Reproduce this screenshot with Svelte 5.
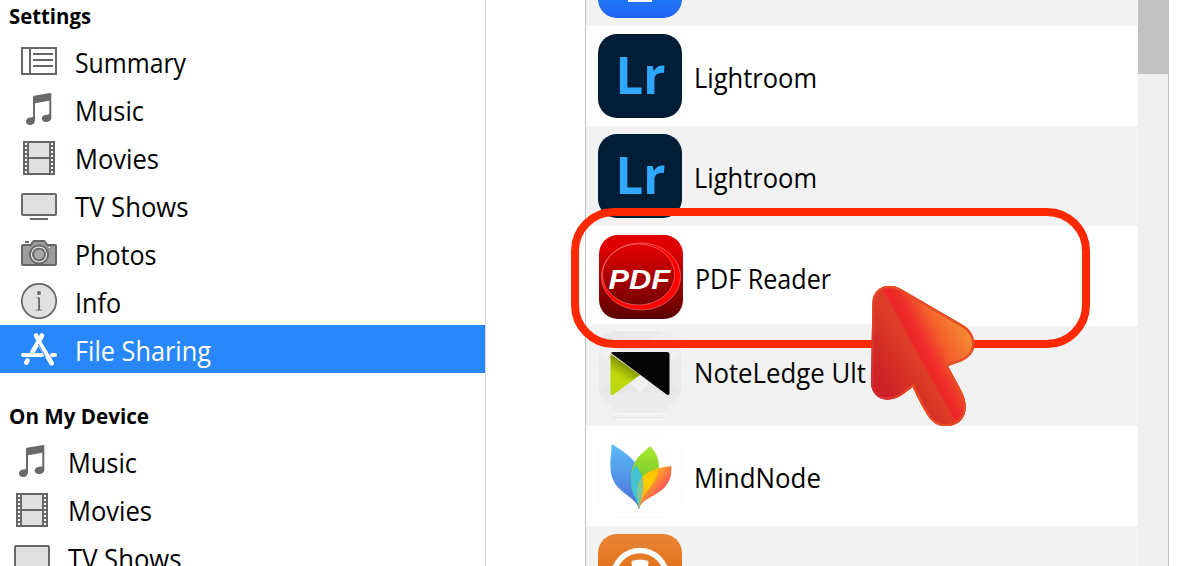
<script lang="ts">
  type Item = { label: string; icon: string; width: number };

  const settings: Item[] = [
    { label: "Summary", icon: "summary", width: 111 },
    { label: "Music", icon: "music", width: 69 },
    { label: "Movies", icon: "movies", width: 84 },
    { label: "TV Shows", icon: "tv", width: 113.5 },
    { label: "Photos", icon: "photos", width: 81.5 },
    { label: "Info", icon: "info", width: 46 },
    { label: "File Sharing", icon: "apps", width: 136 },
  ];

  const device: Item[] = [
    { label: "Music", icon: "music", width: 69 },
    { label: "Movies", icon: "movies", width: 84 },
    { label: "TV Shows", icon: "tv", width: 113.5 },
  ];

  const apps = [
    { name: "", icon: "blue", width: 0 },
    { name: "Lightroom", icon: "lr", width: 123 },
    { name: "Lightroom", icon: "lr", width: 123 },
    { name: "PDF Reader", icon: "pdf", width: 136 },
    { name: "NoteLedge Ult", icon: "note", width: 172 },
    { name: "MindNode", icon: "mind", width: 127 },
    { name: "", icon: "orange", width: 0 },
  ];

  const holes = [2, 6, 10, 14, 18, 22, 26, 30];
  let active = "File Sharing";
</script>

{#snippet label(text: string, width: number)}
  <svg class="label" width={width + 4} height="40" viewBox="0 0 {width + 4} 40">
    <text x="0" y="29" textLength={width} lengthAdjust="spacingAndGlyphs">{text}</text>
  </svg>
{/snippet}

{#snippet sideIcon(name: string)}
  <svg class="side-icon" viewBox="0 0 36 36" width="36" height="36">
    {#if name === "summary"}
      <path d="M1 5h34v26H1zM9 5v26" fill="none" stroke="#666" stroke-width="2" />
      <path d="M12 11h20M12 17h20M12 23h20" stroke="#666" stroke-width="2" />
    {:else if name === "music"}
      <path
        d="M12 6Q12 5 13 4.700L29 2Q30.300 1.800 30.300 3V26.500C30.300 29.500 28 31 25 31C22.500 31 20.700 29.700 20.700 27.600C20.700 25 23 23.700 26 23.700Q28.300 23.700 28.300 22.500V9.700L14 12.300V29C14 32 12 34 9 34C6.700 34 5 32.500 5 30.500C5 28 7 26.500 10 26.500Q12 26.500 12 25z"
        fill="#696969"
      />
    {:else if name === "movies"}
      <rect x="2" y="2" width="32" height="34" fill="#666" />
      <path d="M8 4h20v14H8zM8 20h20v14H8z" fill="#e0e0e0" />
      {#each holes as y}
        <path d="M4 {y + 2}h2v2H4zM30 {y + 2}h2v2h-2z" fill="#fff" />
      {/each}
    {:else if name === "tv"}
      <rect x="1" y="7" width="34" height="21" rx="1" fill="#e0e0e0" stroke="#696969" stroke-width="2" />
      <path d="M9 32h18" stroke="#696969" stroke-width="2" />
    {:else if name === "photos"}
      <path d="M4 6h4v2H4z" fill="#666" />
      <path
        d="M2 10h8q2-4 3-4h10q1 0 3 4h8q1 0 1 1v18q0 1-1 1H2q-1 0-1-1V11q0-1 1-1z"
        fill="#9d9d9d"
        stroke="#666"
        stroke-width="2"
      />
      <circle cx="18" cy="19.500" r="9" fill="#fff" stroke="#666" stroke-width="2" />
      <circle cx="18" cy="19.500" r="6" fill="#a8a8a8" stroke="#666" stroke-width="2" />
      <circle cx="28.500" cy="12.500" r="1.500" fill="#fff" stroke="#666" />
    {:else if name === "info"}
      <circle cx="18" cy="18" r="17.200" fill="#e0e0e0" stroke="#666" stroke-width="1.700" />
      <circle cx="18" cy="10" r="2" fill="#666" />
      <path d="M15.500 14.500H19V26.500H21V27.600H15.300V26.500H17.200V15.600H15.500z" fill="#666" />
    {:else}
      <g stroke="#fff" stroke-width="4.600" stroke-linecap="round" fill="none">
        <path d="M15 4.500L18 9.500M21 4.500L11.500 21" />
        <path d="M2 24H21M31 24H34" stroke-width="4" />
        <path d="M19 13L30.500 32" stroke-width="5" />
        <path d="M6.500 29.500L5.300 31.700" />
      </g>
      <path d="M17.300 13L24.800 26.500" stroke="#2787fb" stroke-width="1" />
    {/if}
  </svg>
{/snippet}

{#snippet appIcon(name: string, id: number)}
  <svg class="app-icon" viewBox="0 0 84 84" width="84" height="84">
    <defs>
      <linearGradient id="blue" x1="0" y1="0" x2="0" y2="1">
        <stop offset="0.600" stop-color="#1a86f8" /><stop offset="1" stop-color="#2263f2" />
      </linearGradient>
      <linearGradient id="red" x1="0" y1="0" x2="0" y2="1">
        <stop offset="0.150" stop-color="#e10000" /><stop offset="1" stop-color="#5c0000" />
      </linearGradient>
      <linearGradient id="lime" gradientUnits="userSpaceOnUse" x1="30" y1="34" x2="22" y2="47">
        <stop offset="0" stop-color="#7c8d00" /><stop offset="1" stop-color="#bdd80b" />
      </linearGradient>
      <linearGradient id="leaf-blue" x1="0" y1="0" x2="0" y2="1">
        <stop offset="0" stop-color="#5cbcf8" /><stop offset="1" stop-color="#4a6fd8" />
      </linearGradient>
      <linearGradient id="leaf-green" x1="0" y1="0" x2="0" y2="1">
        <stop offset="0" stop-color="#a9e82e" /><stop offset="0.550" stop-color="#78c92c" />
      </linearGradient>
      <linearGradient id="leaf-red" x1="0.200" y1="0.200" x2="0.700" y2="0.700">
        <stop offset="0" stop-color="#ffd400" /><stop offset="0.500" stop-color="#fa8b35" />
        <stop offset="1" stop-color="#fa4861" />
      </linearGradient>
      <linearGradient id="leaf-yellow" x1="0" y1="0" x2="0" y2="1">
        <stop offset="0" stop-color="#ffc400" /><stop offset="0.400" stop-color="#ffd000" />
        <stop offset="1" stop-color="#f79a3c" />
      </linearGradient>
      <linearGradient id="amber" x1="0" y1="0" x2="0" y2="1">
        <stop offset="0" stop-color="#e98435" /><stop offset="0.500" stop-color="#e27117" />
      </linearGradient>
      <clipPath id="round-{id}"><rect width="84" height="84" rx="19" /></clipPath>
    </defs>
    {#if name === "blue"}
      <rect width="84" height="84" rx="19" fill="url(#blue)" />
      <path d="M30 60h24v8H30z" fill="#fff" />
    {:else if name === "lr"}
      <rect width="84" height="84" rx="19" fill="#001e36" />
      <text class="lr-text" x="17.500" y="60" textLength="50" lengthAdjust="spacingAndGlyphs">Lr</text>
    {:else if name === "pdf"}
      <rect width="84" height="84" rx="19" fill="url(#red)" />
      <path
        fill-rule="evenodd"
        d="M42 8A39.500 33.500 0 1 1 41.900 8zM39.500 9A36 30.500 0 1 0 39.600 9z"
        fill="#f00"
        stroke="#e88"
        stroke-width="0.600"
      />
      <text class="pdf-text" x="9.500" y="53.500" textLength="61.500" lengthAdjust="spacingAndGlyphs">PDF</text>
    {:else if name === "note"}
      <g clip-path="url(#round-{id})">
        <rect width="84" height="84" fill="#f0f0f0" />
        <path
          d="M20 0L42 21L64 0zM0 21L21 42L0 63zM84 21L63 42L84 63zM42 63L21 84H63zM21 42L42 63L21 84L0 63zM63 42L84 63L63 84L42 63z"
          fill="#ebebeb"
        />
        <path d="M21 42L42 63L0 63zM63 42L84 63H42zM42 21L20 0H0L21 21z" fill="#e8e8e8" />
      </g>
      <rect
        x="0.500"
        y="0.500"
        width="83"
        height="83"
        rx="19"
        fill="none"
        stroke="#fafafa"
        stroke-dasharray="2 1"
      />
      <path d="M15 87.500h53" stroke="#e5e5e5" />
      <path d="M12.500 24L42 45L15 65Q12.500 66 12.500 63z" fill="url(#lime)" />
      <path d="M13 23Q14 22 15 22H69Q71.500 22 71.500 24V63Q71.500 66 69 64.700z" fill="#050505" />
    {:else if name === "mind"}
      <path d="M15 1h54M15 83.500h54M.5 15v54M83.500 15v54" stroke="#fafafa" />
      <path
        d="M13.500 10C27 18 47 31 45 50Q44 64 41 75C38 61 13 59 12.500 34C12 22 14 17 13.500 10z"
        fill="url(#leaf-blue)"
      />
      <path
        d="M52 12C60 20 62 29 60.500 38C59 53 44 57 41 75C40 63 32 57 33 43C34 25 44 20 52 12z"
        fill="url(#leaf-green)"
      />
      <path d="M37.500 31C46 41 48 50 41 75C39 64 31 57 33 43Q34 36 37.500 31z" fill="#43c2d0" />
      <path
        d="M73.500 32C73 40 74 44 67 53C58 63 44 64 41 75C38 52 41 45 48 40C56 34 65 33 73.500 32z"
        fill="url(#leaf-red)"
      />
      <path d="M60.500 35C58 51 46 57 41 73C38 52 41 45 48 40Q55 36 60.500 35z" fill="url(#leaf-yellow)" />
      <path d="M44.500 43C47 53 43 65 41 75C39 62 39 50 44.500 43z" fill="#7fc79a" />
    {:else}
      <rect width="84" height="84" rx="19" fill="url(#amber)" />
      <circle cx="42" cy="43" r="26.500" fill="none" stroke="#fff" stroke-width="5.500" />
      <path d="M33.500 27Q42 24 50.500 27L49 50H35z" fill="#fff" />
    {/if}
  </svg>
{/snippet}

<div class="page">
  <aside class="sidebar">
    <h2>
      <svg width="90" height="37"><text x="0" y="24" textLength="82" lengthAdjust="spacingAndGlyphs">Settings</text></svg>
    </h2>
    <ul>
      {#each settings as item}
        <li class:active={item.label === active}>
          {@render sideIcon(item.icon)}
          {@render label(item.label, item.width)}
        </li>
      {/each}
    </ul>
    <h2 class="second">
      <svg width="150" height="37"><text x="0" y="24" textLength="140" lengthAdjust="spacingAndGlyphs">On My Device</text></svg>
    </h2>
    <ul class="device">
      {#each device as item}
        <li>
          {@render sideIcon(item.icon)}
          {@render label(item.label, item.width)}
        </li>
      {/each}
    </ul>
  </aside>

  <main class="panel">
    <div class="apps">
      {#each apps as app, i}
        <div class="app {app.icon}">
          {@render appIcon(app.icon, i)}
          {#if app.name}
            {@render label(app.name, app.width)}
          {/if}
        </div>
      {/each}
    </div>
    <div class="scrollbar"><div class="thumb"></div></div>
  </main>

  <div class="highlight"></div>

  <svg class="pointer" viewBox="57 283 321 432" width="107" height="144">
    <defs>
      <linearGradient id="arrow-left" gradientUnits="userSpaceOnUse" x1="100" y1="600" x2="210" y2="530">
        <stop offset="0" stop-color="#cd2027" /><stop offset="1" stop-color="#dc3d26" />
      </linearGradient>
      <linearGradient id="arrow-right" gradientUnits="userSpaceOnUse" x1="190" y1="452" x2="345" y2="372">
        <stop offset="0" stop-color="#ee2529" /><stop offset="0.160" stop-color="#ee2f2a" />
        <stop offset="0.430" stop-color="#f3602c" /><stop offset="1" stop-color="#f79434" />
      </linearGradient>
      <linearGradient id="arrow-edge" gradientUnits="userSpaceOnUse" x1="65" y1="600" x2="180" y2="560">
        <stop offset="0" stop-color="#d32730" /><stop offset="1" stop-color="#e54c26" />
      </linearGradient>
      <clipPath id="arrow-clip">
        <path
          d="M67 342C67 306 91 288 119 288C132 288 143 292 153 298L340 407C359 418 374 439 373 466C372 492 352 508 329 517L294 529L333 602C345 625 350 645 346 665C341 694 316 710 288 710C267 710 251 701 239 686C220 660 203 625 188 592C166 609 143 630 112 630C82 630 63 606 63 580Z"
        />
      </clipPath>
    </defs>
    <g clip-path="url(#arrow-clip)">
      <path d="M57 283H378V715H57z" fill="url(#arrow-left)" />
      <path d="M96 296L316 696L378 715V283H90z" fill="url(#arrow-right)" />
      <path
        d="M67 342C67 306 91 288 119 288C132 288 143 292 153 298L340 407C359 418 374 439 373 466C372 492 352 508 329 517L294 529L333 602C345 625 350 645 346 665C341 694 316 710 288 710C267 710 251 701 239 686C220 660 203 625 188 592C166 609 143 630 112 630C82 630 63 606 63 580Z"
        fill="none"
        stroke="url(#arrow-edge)"
        stroke-width="14"
      />
    </g>
  </svg>
</div>

<style>
  :global(body) {
    background: #fff;
    overflow: hidden;
  }

  .page {
    position: relative;
    display: flex;
    width: 1178px;
    height: 566px;
    overflow: hidden;
    color: #000;
    font-family: "Open Sans", "Noto Sans", sans-serif;
  }

  .sidebar {
    box-sizing: border-box;
    flex: none;
    width: 486px;
    border-right: 1px solid #d9d9d9;
  }

  h2 {
    height: 37px;
    margin: 0;
    padding-left: 9px;
    font-size: 20.5px;
    font-weight: 700;
  }

  h2.second {
    margin-top: 27px;
  }

  h2 svg {
    display: block;
  }

  ul {
    margin: 0;
    padding: 0;
    list-style: none;
  }

  li {
    display: flex;
    align-items: center;
    gap: 18px;
    height: 48px;
    padding-left: 21px;
  }

  .device li {
    padding-left: 14px;
  }

  li.active {
    background: #2787fb;
    color: #fff;
  }

  .label {
    flex: none;
    overflow: visible;
    font-size: 26.5px;
  }

  li .label {
    padding-top: 6px;
  }

  text {
    fill: currentColor;
  }

  .side-icon,
  .app-icon {
    display: block;
    flex: none;
  }

  .app-icon {
    overflow: visible;
  }

  .panel {
    display: flex;
    box-sizing: border-box;
    width: 584px;
    height: 566px;
    margin-left: 99px;
    border-right: 1px solid #c1c1c1;
    border-left: 1px solid #c1c1c1;
  }

  .apps {
    flex: 1;
    margin-top: -74px;
  }

  .app {
    display: flex;
    align-items: center;
    box-sizing: border-box;
    gap: 12px;
    height: 100px;
    padding-left: 12px;
  }

  .app:nth-child(odd) {
    background: #f2f2f2;
  }

  .app .label {
    padding-top: 6px;
  }

  .app.pdf {
    padding: 2px 0 0 13px;
    background: linear-gradient(#f2f2f2, #f2f2f2) 6px 98px / 310px 2px no-repeat;
  }

  .app.note {
    padding-bottom: 10px;
  }

  .app.note .app-icon {
    margin-top: 2px;
  }

  .lr-text {
    fill: #31a8ff;
    font-size: 52px;
    font-weight: 700;
  }

  .pdf-text {
    fill: #fff;
    font-family: "Liberation Sans", sans-serif;
    font-size: 28px;
    font-style: italic;
    font-weight: 700;
  }

  .scrollbar {
    flex: none;
    width: 30px;
    background: #efefef;
  }

  .thumb {
    height: 74px;
    background: #c1c1c1;
  }

  /* callout drawn over the list */
  .highlight {
    position: absolute;
    top: 208px;
    left: 571px;
    box-sizing: border-box;
    width: 519px;
    height: 140px;
    border: 8px solid #ff2900;
    border-radius: 43px;
  }

  .pointer {
    position: absolute;
    top: 284.330px;
    left: 869px;
  }
</style>
